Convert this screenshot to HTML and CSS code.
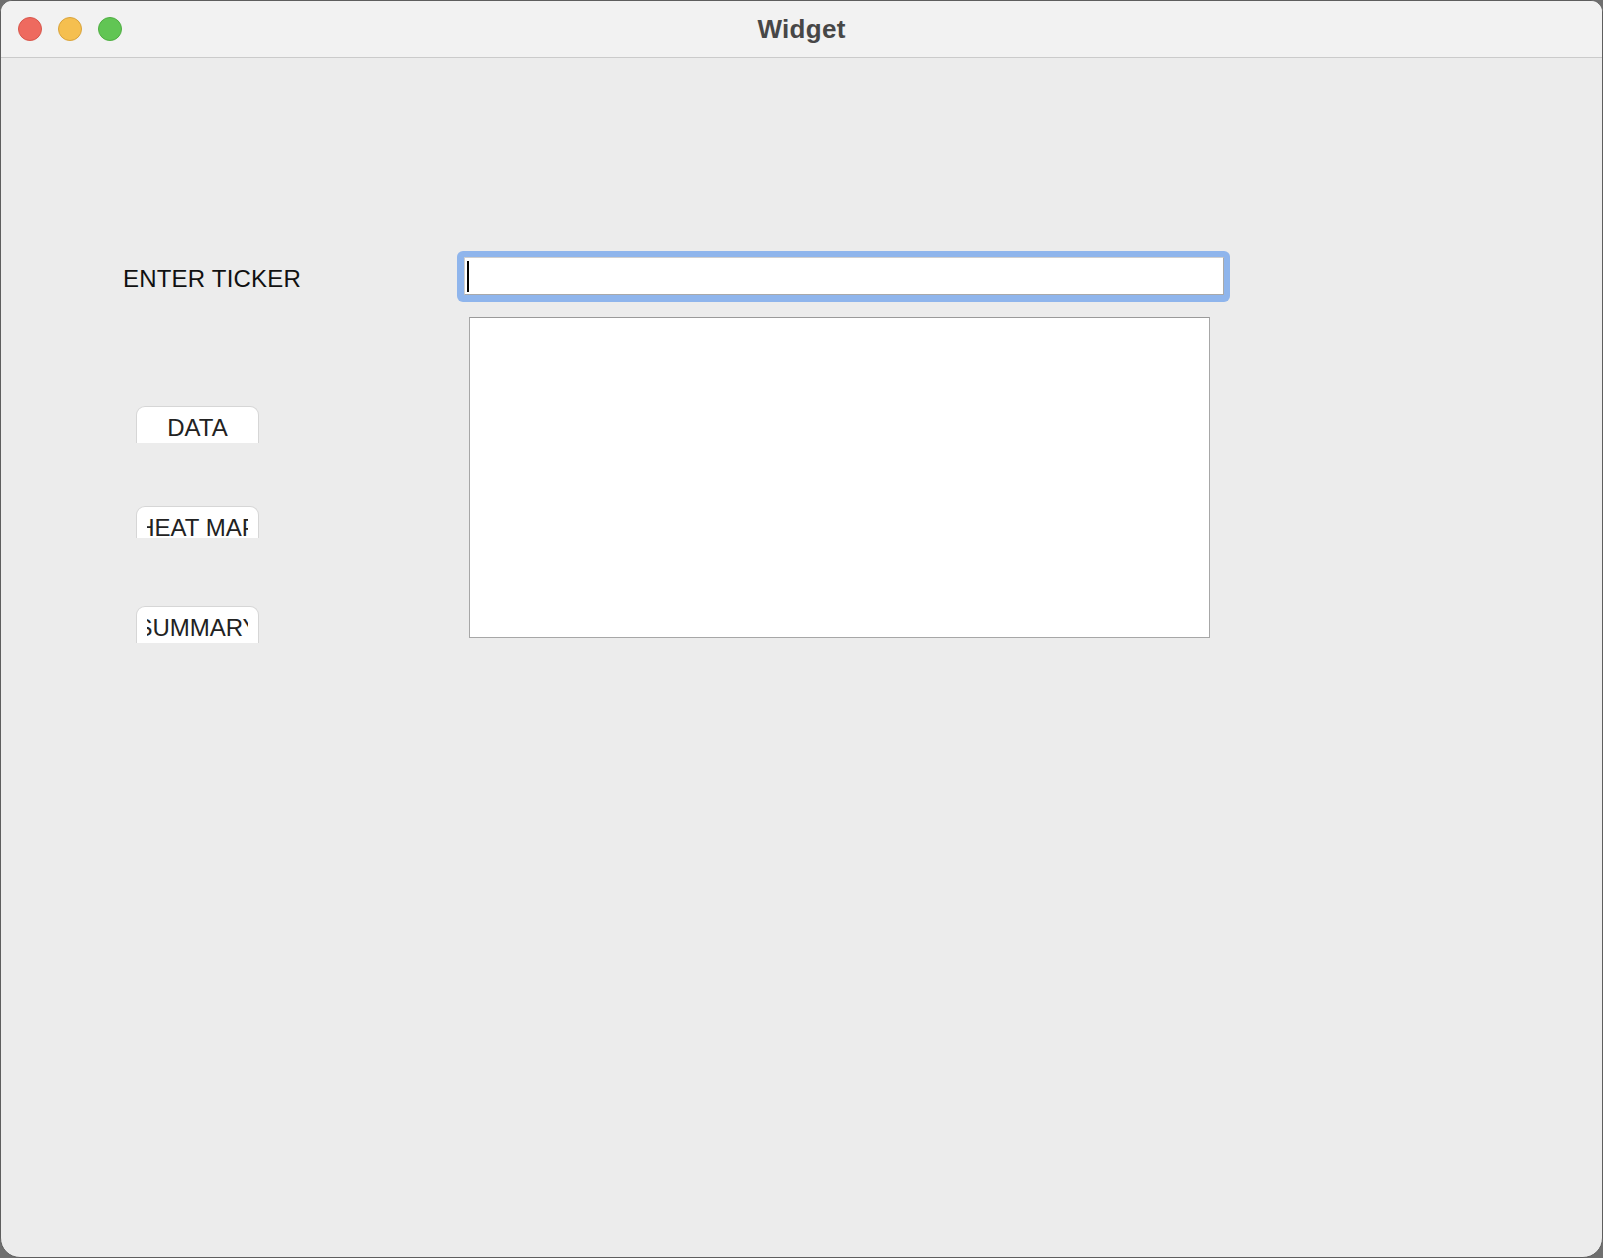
FILE: index.html
```html
<!DOCTYPE html>
<html>
<head>
<meta charset="utf-8">
<title>Widget</title>
<link rel="stylesheet" href="styles.css">
</head>
<body>
<div class="window">
  <div class="titlebar">
    <div class="lights">
      <span class="light red"></span>
      <span class="light yellow"></span>
      <span class="light green"></span>
    </div>
    <div class="title">Widget</div>
    <div></div>
  </div>
  <div class="content">
    <div class="form">
      <div class="label">ENTER TICKER</div>
      <div class="ring"><div class="field"><span class="caret"></span></div></div>
      <div class="buttons">
        <div class="btn"><span class="btn-clip"><span class="btn-text">DATA</span></span></div>
        <div class="btn short"><span class="btn-clip"><span class="btn-text">HEAT MAP</span></span></div>
        <div class="btn"><span class="btn-clip"><span class="btn-text">SUMMARY</span></span></div>
      </div>
      <div class="output"></div>
    </div>
  </div>
</div>
</body>
</html>
```
FILE: styles.css
```css
html, body {
  margin: 0;
  padding: 0;
  background: #6f6f6f;
}
body {
  width: 1603px;
  height: 1258px;
  overflow: hidden;
  font-family: "Liberation Sans", Arial, sans-serif;
}
.window {
  box-sizing: border-box;
  width: 1603px;
  height: 1258px;
  border: 1px solid #5e5e5e;
  border-radius: 12px 12px 20px 20px;
  background: #ececec;
  overflow: hidden;
  display: flex;
  flex-direction: column;
}
.titlebar {
  height: 56px;
  flex: none;
  background: #f2f2f2;
  border-bottom: 1px solid #cbcbcb;
  display: grid;
  grid-template-columns: 1fr auto 1fr;
  align-items: center;
}
.lights {
  display: flex;
  gap: 16px;
  padding-left: 17px;
}
.light {
  width: 22px;
  height: 22px;
  border-radius: 50%;
  border: 1px solid transparent;
}
.red { background: #ee6a5f; border-color: #d8564b; }
.yellow { background: #f5bf4f; border-color: #d9a33b; }
.green { background: #61c554; border-color: #4fae42; }
.title {
  font-weight: bold;
  font-size: 26px;
  color: #474747;
  letter-spacing: 0.3px;
}
.content {
  flex: 1;
  padding-top: 193px;
  padding-left: 122px;
}
.form {
  display: grid;
  grid-template-columns: 334px 773px;
  grid-template-rows: 51px auto;
  row-gap: 15px;
}
.label {
  font-size: 24px;
  color: #111;
  align-self: center;
  padding-top: 5px;
  letter-spacing: 0.2px;
}
.ring {
  box-sizing: border-box;
  height: 51px;
  background: #8fb5ec;
  border-radius: 6px;
  padding: 6px 6px 7px 7px;
}
.field {
  box-sizing: border-box;
  height: 38px;
  background: #fff;
  border-top: 1px solid #cfcfcf;
  border-left: 1px solid #cfcfcf;
  border-right: 1px solid #a9a9a9;
  border-bottom: 1px solid #a9a9a9;
  padding: 3px 0 0 2px;
}
.caret {
  display: block;
  width: 2px;
  height: 31px;
  background: #000;
}
.buttons {
  display: flex;
  flex-direction: column;
  align-items: flex-start;
  padding-top: 89px;
  padding-left: 13px;
}
.btn {
  box-sizing: border-box;
  width: 123px;
  height: 37px;
  margin-bottom: 63px;
  background: #fff;
  border: 1px solid #d6d6d6;
  border-bottom: none;
  border-radius: 9px 9px 0 0;
  display: flex;
  padding: 0 10px;
}
.btn.short {
  height: 32px;
  margin-bottom: 68px;
}
.btn-clip {
  flex: 1;
  display: flex;
  justify-content: center;
  overflow: hidden;
  padding-top: 7px;
}
.btn-text {
  font-size: 24px;
  color: #222;
  white-space: nowrap;
  flex: none;
}
.output {
  box-sizing: border-box;
  margin-left: 12px;
  width: 741px;
  height: 321px;
  background: #fff;
  border: 1px solid #a7a7a7;
  border-top-color: #9a9a9a;
}
```
